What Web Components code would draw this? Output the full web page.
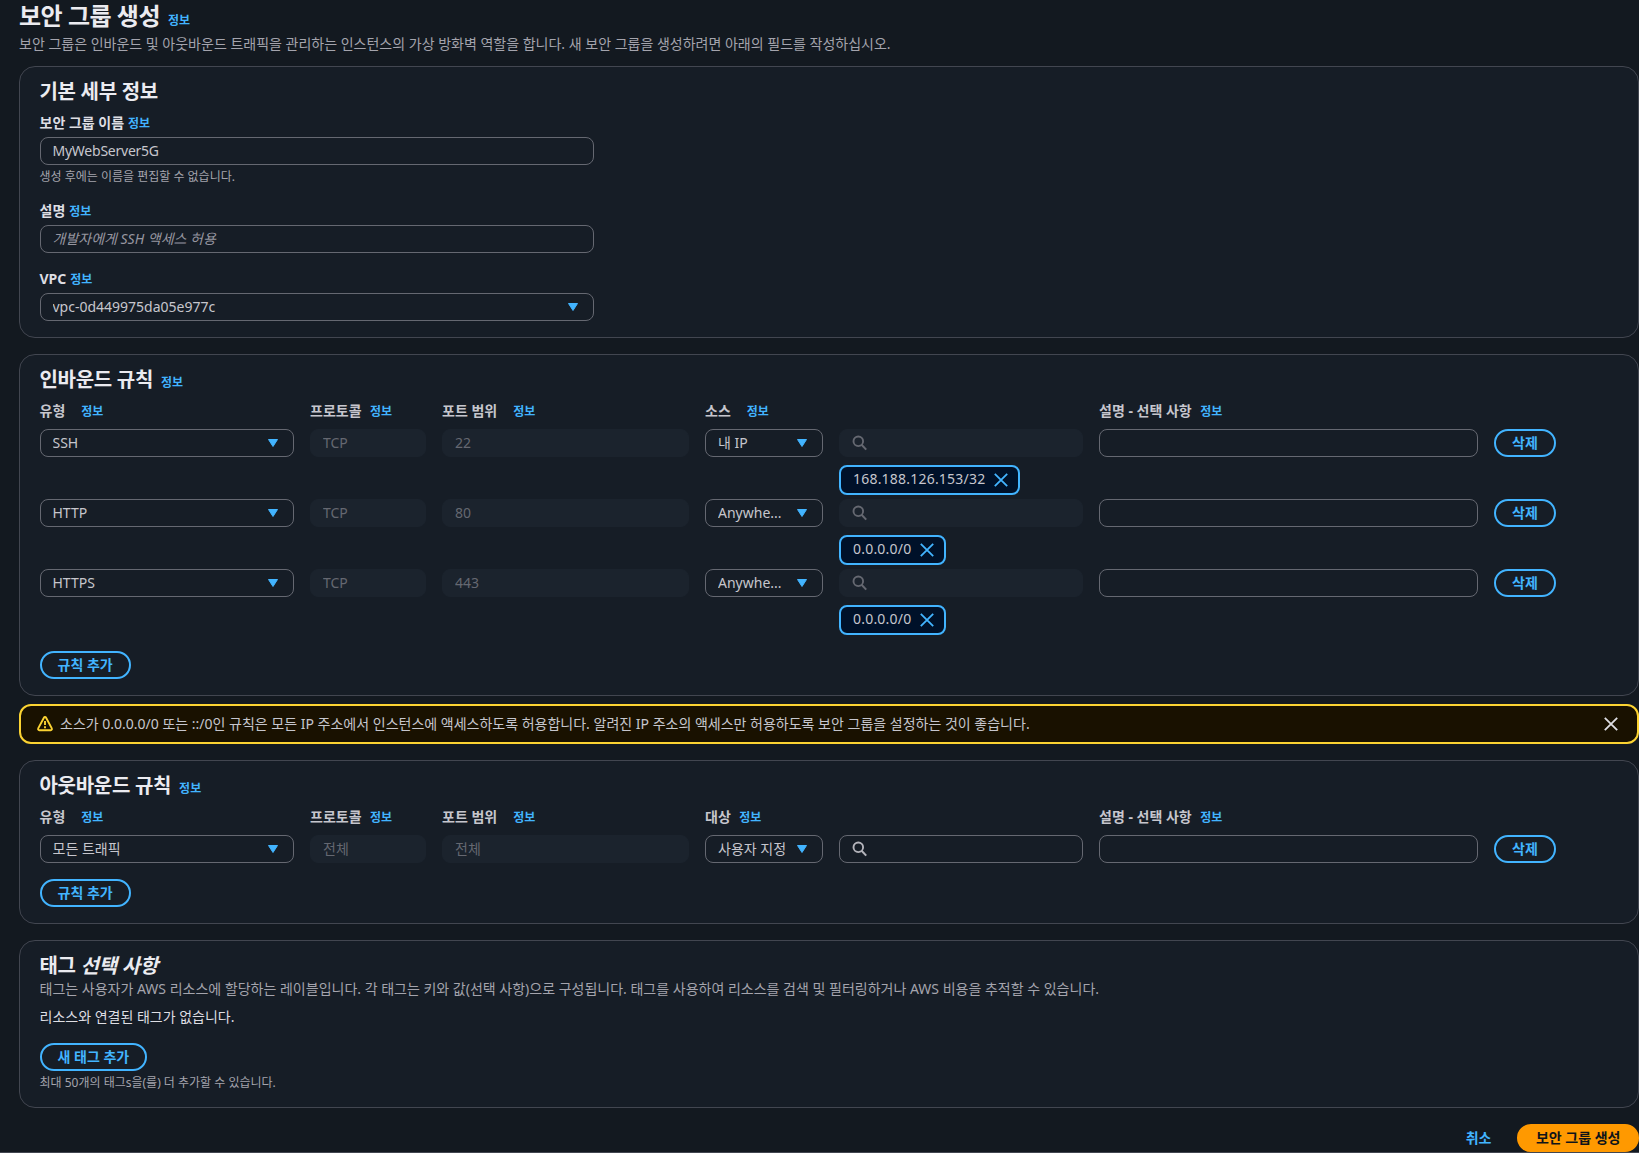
<!DOCTYPE html>
<html lang="ko">
<head>
<meta charset="utf-8">
<title>보안 그룹 생성</title>
<style>
  body {
    margin: 0;
    background: #131920;
    color: #c6c6cd;
    font: 14px/20px "Noto Sans", "Noto Sans CJK KR", sans-serif;
    --accent: #42b4ff;
    --muted: #a4a4ad;
    --heading: #ebebf0;
    --line: #424650;
    --field-line: #656871;
    overflow: hidden;
  }
</style>
</head>
<body>
<sg-page></sg-page>

<script>
  const define = (name, html, setup) => {
    const template = document.createElement("template");
    template.innerHTML = html;
    customElements.define(name, class extends HTMLElement {
      constructor() {
        super();
        this.attachShadow({ mode: "open" });
        this.shadowRoot.appendChild(template.content.cloneNode(true));
      }

      connectedCallback() {
        if (setup) setup(this, this.shadowRoot);
      }
    });
  };

  const icons = {
    caret: `<path d="M3.5 4.5h9L8 11.5z" fill="currentColor" stroke="currentColor" stroke-linejoin="round"/>`,
    close: `<path d="m1.8 1.8 12.4 12.4M14.2 1.8 1.8 14.2" fill="none" stroke="currentColor" stroke-width="1.8"/>`,
    search: `<circle cx="6.3" cy="6.3" r="4.8" fill="none" stroke="currentColor" stroke-width="1.9"/><path d="m14.2 14.6-4.6-4.8" fill="none" stroke="currentColor" stroke-width="2"/>`,
    warning: `<path d="M6.9 1.7 1.2 12.4a1.2 1.2 0 0 0 1.1 1.8h11.4a1.2 1.2 0 0 0 1.1-1.8L9.1 1.7a1.25 1.25 0 0 0-2.2 0z" fill="none" stroke="currentColor" stroke-width="1.9"/><path d="M8 5v4M8 10.2v2" fill="none" stroke="currentColor" stroke-width="1.9"/>`,
  };

  define("sg-icon", `
    <style>
      :host { display: block; width: 16px; height: 16px; flex: none; }
      svg { display: block; width: 100%; height: 100%; overflow: visible; }
    </style>
    <svg viewBox="0 0 16 16"></svg>
  `, (el, root) => {
    root.querySelector("svg").innerHTML = icons[el.getAttribute("name")];
  });

  define("sg-info", `
    <style>
      :host {
        display: inline;
        color: var(--accent);
        font-size: 12px;
        font-weight: 700;
        font-style: normal;
        letter-spacing: 0;
      }
    </style>
    <span>정보</span>
  `);

  define("sg-button", `
    <style>
      :host {
        display: inline-flex;
        align-items: center;
        justify-content: center;
        box-sizing: border-box;
        height: 28px;
        padding: 0 16px;
        border: 2px solid var(--accent);
        border-radius: 20px;
        color: var(--accent);
        font-weight: 700;
        line-height: 20px;
        white-space: nowrap;
      }
      :host([variant="link"]) { border-color: transparent; }
      :host([variant="primary"]) {
        padding: 0 16.5px;
        border-color: #ff9900;
        background: #ff9900;
        color: #0f141a;
      }
    </style>
    <slot></slot>
  `);

  // input, select and search box share one frame
  define("sg-field", `
    <style>
      :host {
        display: flex;
        align-items: center;
        box-sizing: border-box;
        height: 28px;
        padding: 0 12px;
        border: 1px solid var(--field-line);
        border-radius: 8px;
        min-width: 0;
      }
      :host([disabled]) {
        border-color: #1b232d;
        background: #1b232d;
        color: #656871;
      }
      :host([placeholder]) { color: #9696a0; font-style: italic; }
      :host([tight]) { letter-spacing: -.24px; }
      span { flex: 1; min-width: 0; overflow: hidden; text-overflow: ellipsis; white-space: nowrap; }
      .caret { color: var(--accent); }
      .search { color: #b4b4bb; }
      :host([disabled]) .search { color: #656871; }
    </style>
    <sg-icon class="search" name="search"></sg-icon>
    <span><slot></slot></span>
    <sg-icon class="caret" name="caret"></sg-icon>
  `, (el, root) => {
    const kind = el.getAttribute("kind");
    if (kind !== "search") root.querySelector(".search")?.remove();
    if (kind !== "select") root.querySelector(".caret")?.remove();
  });

  define("sg-token", `
    <style>
      :host {
        display: inline-flex;
        align-items: center;
        gap: 8px;
        box-sizing: border-box;
        height: 30px;
        padding: 0 9px 0 12px;
        border: 2px solid var(--accent);
        border-radius: 8px;
        background: #001129;
        letter-spacing: .21px;
      }
      span { margin-top: -2px; }
      sg-icon { color: var(--accent); margin-top: -1px; }
    </style>
    <span><slot></slot></span>
    <sg-icon name="close"></sg-icon>
  `);

  define("sg-card", `
    <style>
      :host {
        display: block;
        box-sizing: border-box;
        padding: 13px 19px 16px 19.5px;
        border: 1px solid var(--line);
        border-radius: 16px;
        background: #161d26;
      }
      header { height: 33px; }
      :host([described]) header { height: 53px; }
      h2 { margin: 0; height: 24px; color: var(--heading); font-size: 20px; line-height: 24px; letter-spacing: -.3px; }
      p { margin: 1px 0 0; color: var(--muted); }
    </style>
    <header>
      <h2><slot name="title"></slot></h2>
      <p><slot name="description"></slot></p>
    </header>
    <slot></slot>
  `);

  define("sg-form-field", `
    <style>
      :host { display: block; width: 554.5px; }
      .label { display: flex; gap: 4px; margin-bottom: 4px; height: 20px; color: #dedee3; font-weight: 700; }
      .label sg-info { margin-top: 1px; }
      .hint { display: block; color: var(--muted); font-size: 12px; line-height: 16px; }
      ::slotted([slot="hint"]) { display: block; margin-top: 4px; }
    </style>
    <div class="label"><slot name="label"></slot><sg-info></sg-info></div>
    <slot></slot>
    <div class="hint"><slot name="hint"></slot></div>
  `);

  define("sg-rules", `
    <style>
      :host { display: block; }
      .grid {
        display: grid;
        grid-template-columns: 254.5px 116px 247px 118px 244px 379px 62px;
        column-gap: 16px;
      }
      .head { height: 20px; margin-bottom: 8px; font-weight: 700; }
      .head div { display: flex; gap: 8.5px; }
      .head .wide { gap: 16px; }
      .head sg-info { margin-top: 1px; }
      .row { align-items: start; }
      .row.tokens { height: 70px; }
      .source { display: grid; gap: 8px; justify-items: start; }
      .source sg-field { width: 100%; }
      .add { margin-top: 16px; }
    </style>
    <div class="grid head"></div>
    <div class="rows"></div>
    <sg-button class="add">규칙 추가</sg-button>
  `, (el, root) => {
    const outbound = el.hasAttribute("outbound");
    const columns = [
      ["유형", "wide"], ["프로토콜"], ["포트 범위", "wide"],
      outbound ? ["대상"] : ["소스", "wide"],
      null, ["설명 - 선택 사항"],
    ];
    root.querySelector(".head").innerHTML = columns.map((c) =>
      c ? `<div class="${c[1] || ""}"><span>${c[0]}</span><sg-info></sg-info></div>` : "<div></div>"
    ).join("");

    const rules = outbound
      ? [["모든 트래픽", "전체", "전체", "사용자 지정"]]
      : [
          ["SSH", "TCP", "22", "내 IP", "168.188.126.153/32"],
          ["HTTP", "TCP", "80", "Anywhe...", "0.0.0.0/0"],
          ["HTTPS", "TCP", "443", "Anywhe...", "0.0.0.0/0"],
        ];
    root.querySelector(".rows").innerHTML = rules.map(([type, protocol, port, source, cidr]) => `
      <div class="grid row ${cidr ? "tokens" : ""}">
        <sg-field kind="select">${type}</sg-field>
        <sg-field disabled>${protocol}</sg-field>
        <sg-field disabled>${port}</sg-field>
        <sg-field kind="select">${source}</sg-field>
        <div class="source">
          <sg-field kind="search" ${cidr ? "disabled" : ""}></sg-field>
          ${cidr ? `<sg-token>${cidr}</sg-token>` : ""}
        </div>
        <sg-field></sg-field>
        <sg-button>삭제</sg-button>
      </div>
    `).join("");
    // the last token row ends right under its token
    if (!outbound) root.querySelector(".rows").lastElementChild.style.height = "66px";
  });

  define("sg-alert", `
    <style>
      :host {
        display: flex;
        align-items: center;
        gap: 7px;
        box-sizing: border-box;
        height: 40px;
        padding: 0 18px 0 16px;
        border: 2px solid #fbd332;
        border-radius: 12px;
        background: #191100;
      }
      .text { flex: 1; }
      .mark { color: #fbd332; }
      .close { color: #dedee3; }
    </style>
    <sg-icon class="mark" name="warning"></sg-icon>
    <div class="text"><slot></slot></div>
    <sg-icon class="close" name="close"></sg-icon>
  `);

  define("sg-page", `
    <style>
      :host { display: block; box-sizing: border-box; height: 1153px; padding-left: 19px; border-bottom: 1px solid var(--line); }
      h1 {
        display: flex;
        align-items: baseline;
        gap: 8px;
        box-sizing: border-box;
        height: 31px;
        margin: 0;
        padding-top: 1px;
        color: var(--heading);
        font-size: 24px;
        line-height: 30px;
        letter-spacing: -.5px;
      }
      .lead { height: 20px; margin: 3px 0 12px; color: var(--muted); }
      main { display: grid; gap: 16px; }
      .fields { display: grid; gap: 16px; }
      .inbound { display: grid; gap: 8px; }
      .title { display: flex; align-items: baseline; gap: 8px; }
      .empty { margin: 0 0 16px; color: #dedee3; }
      .hint { display: block; margin-top: 4px; color: var(--muted); font-size: 12px; line-height: 16px; }
      sg-button { vertical-align: top; }
      footer { display: flex; justify-content: flex-end; gap: 8px; margin-top: 16px; }
    </style>
    <h1>보안 그룹 생성 <sg-info></sg-info></h1>
    <p class="lead">보안 그룹은 인바운드 및 아웃바운드 트래픽을 관리하는 인스턴스의 가상 방화벽 역할을 합니다. 새 보안 그룹을 생성하려면 아래의 필드를 작성하십시오.</p>
    <main>
      <sg-card>
        <span slot="title">기본 세부 정보</span>
        <div class="fields">
          <sg-form-field>
            <span slot="label">보안 그룹 이름</span>
            <sg-field tight>MyWebServer5G</sg-field>
            <span slot="hint">생성 후에는 이름을 편집할 수 없습니다.</span>
          </sg-form-field>
          <sg-form-field>
            <span slot="label">설명</span>
            <sg-field placeholder>개발자에게 SSH 액세스 허용</sg-field>
          </sg-form-field>
          <sg-form-field>
            <span slot="label">VPC</span>
            <sg-field kind="select">vpc-0d449975da05e977c</sg-field>
          </sg-form-field>
        </div>
      </sg-card>
      <div class="inbound">
        <sg-card>
          <span slot="title" class="title">인바운드 규칙 <sg-info></sg-info></span>
          <sg-rules></sg-rules>
        </sg-card>
        <sg-alert>소스가 0.0.0.0/0 또는 ::/0인 규칙은 모든 IP 주소에서 인스턴스에 액세스하도록 허용합니다. 알려진 IP 주소의 액세스만 허용하도록 보안 그룹을 설정하는 것이 좋습니다.</sg-alert>
      </div>
      <sg-card>
        <span slot="title" class="title">아웃바운드 규칙 <sg-info></sg-info></span>
        <sg-rules outbound></sg-rules>
      </sg-card>
      <sg-card described>
        <span slot="title">태그 <i>선택 사항</i></span>
        <span slot="description">태그는 사용자가 AWS 리소스에 할당하는 레이블입니다. 각 태그는 키와 값(선택 사항)으로 구성됩니다. 태그를 사용하여 리소스를 검색 및 필터링하거나 AWS 비용을 추적할 수 있습니다.</span>
        <p class="empty">리소스와 연결된 태그가 없습니다.</p>
        <sg-button>새 태그 추가</sg-button>
        <span class="hint">최대 50개의 태그s을(를) 더 추가할 수 있습니다.</span>
      </sg-card>
    </main>
    <footer>
      <sg-button variant="link">취소</sg-button>
      <sg-button variant="primary">보안 그룹 생성</sg-button>
    </footer>
  `);
</script>
</body>
</html>
